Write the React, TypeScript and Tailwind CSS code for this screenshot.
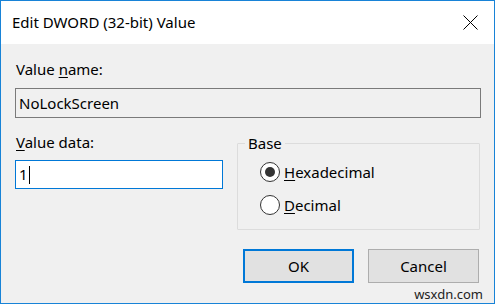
import React from 'react';

const Radio: React.FC<{ checked?: boolean; label: string; mnemonic: string }> = ({ checked, label, mnemonic }) => (
  <div className="flex items-center h-[20px]">
    <div className="w-[20px] h-[20px] rounded-full border border-[#333333] bg-white flex items-center justify-center">
      {checked && <div className="w-[10px] h-[10px] rounded-full bg-[#333333]" />}
    </div>
    <span className="ml-[4px] text-[15px] text-black">
      <span className="underline underline-offset-2">{mnemonic}</span>
      {label.slice(mnemonic.length)}
    </span>
  </div>
);

const App: React.FC = () => {
  return (
    <div className="w-[495px] h-[304px] border border-[#1883d7] bg-[#f0f0f0] flex flex-col font-['Noto_Sans',sans-serif] overflow-hidden">
      <div className="h-[43px] bg-white flex items-center justify-between pl-[11px] pr-[16px]">
        <span className="text-[15px] text-black">Edit DWORD (32-bit) Value</span>
        <svg width="15" height="15" viewBox="0 0 15 15">
          <path d="M0.5 0.5 L14.5 14.5 M14.5 0.5 L0.5 14.5" stroke="#000" strokeWidth="1" />
        </svg>
      </div>

      <div className="flex flex-col px-[14px] pt-[15px]">
        <label className="text-[15px] text-black leading-[20px] pl-[1px]">
          Value <span className="underline underline-offset-2">n</span>ame:
        </label>
        <div className="mt-[9px] h-[30px] w-[466px] border border-[#7a7a7a] bg-[#f0f0f0] flex items-center px-[3px] text-[15px] text-black">
          NoLockScreen
        </div>

        <div className="flex mt-[14px]">
          <div className="flex flex-col w-[208px]">
            <label className="text-[15px] text-black leading-[20px] pl-[1px]">
              <span className="underline underline-offset-2">V</span>alue data:
            </label>
            <div className="mt-[8px] h-[29px] w-[208px] border border-[#0078d7] bg-white flex items-center px-[3px] text-[15px] text-black">
              1<span className="w-[1px] h-[18px] bg-black ml-[1px]" />
            </div>
          </div>

          <fieldset className="ml-[14px] mt-[2px] w-[243px] h-[96px] border border-[#dcdcdc] rounded-[1px]">
            <legend className="ml-[7px] px-[3px] text-[15px] text-black leading-[18px]">Base</legend>
            <div className="flex flex-col gap-[13px] pl-[22px] pt-[10px]">
              <Radio checked label="Hexadecimal" mnemonic="H" />
              <Radio label="Decimal" mnemonic="D" />
            </div>
          </fieldset>
        </div>

        <div className="flex justify-end gap-[14px] mt-[19px] pr-[1px]">
          <button className="w-[111px] h-[34px] border-2 border-[#0078d7] bg-[#e1e1e1] text-[15px] text-black">OK</button>
          <button className="w-[111px] h-[34px] border border-[#adadad] bg-[#e1e1e1] text-[15px] text-black">Cancel</button>
        </div>
        <div className="flex justify-end -mr-[3px] mt-[4px]">
          <span className="text-[13px] leading-[14px] text-[#222222]">wsxdn.com</span>
        </div>
      </div>
    </div>
  );
};

export default App;
